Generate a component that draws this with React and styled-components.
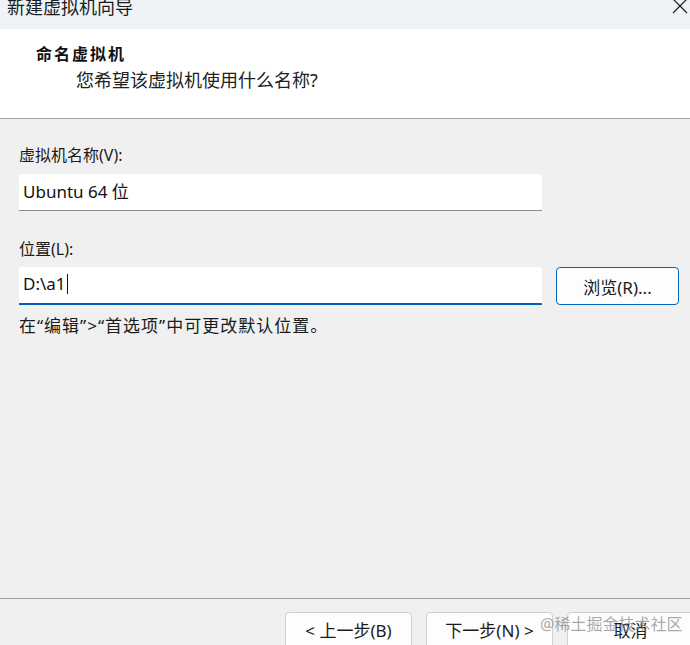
import React from 'react'
import styled, { createGlobalStyle } from 'styled-components'

const GlobalStyle = createGlobalStyle`
  html, body {
    margin: 0;
    padding: 0;
    background: #f0f0f0;
  }
  body {
    font-family: "Noto Sans", "Noto Sans CJK SC", sans-serif;
    color: #1b1b1b;
  }
`

const Window = styled.div`
  position: relative;
  width: 690px;
  height: 645px;
  overflow: hidden;
  display: flex;
  flex-direction: column;
  background: #f0f0f0;
`

/* barre de titre */
const TitleBar = styled.div`
  height: 29px;
  flex-shrink: 0;
  background: #eef3f8;
  display: flex;
  justify-content: space-between;
  align-items: flex-start;
  padding: 0 2px 0 7px;
  overflow: hidden;
`

const Title = styled.div`
  font-size: 18px;
  line-height: 16px;
  margin-top: -2px;
  color: #1b1b1b;
  font-family: "Noto Sans CJK SC", sans-serif;
`

const Close = styled.svg`
  width: 16px;
  height: 16px;
  margin-top: -1px;
`

const Header = styled.div`
  height: 90px;
  flex-shrink: 0;
  box-sizing: border-box;
  background: #ffffff;
  border-bottom: 1px solid #a0a0a0;
  display: flex;
  flex-direction: column;
  padding-top: 13px;
`

const Heading = styled.div`
  margin-left: 36px;
  font-size: 16px;
  line-height: 22px;
  font-weight: 700;
  letter-spacing: 2px;
  font-family: "Noto Sans CJK SC", sans-serif;
  color: #111;
`

const SubHeading = styled.div`
  margin-left: 76px;
  margin-top: 5px;
  font-size: 18px;
  line-height: 22px;
  color: #222;
`

const Body = styled.div`
  flex: 1;
  display: flex;
  flex-direction: column;
  padding: 26px 11px 0 19px;
`

const Label = styled.div`
  font-size: 16px;
  line-height: 20px;
  color: #1b1b1b;
  margin-top: ${(p) => p.gap || 0}px;
`

const Row = styled.div`
  display: flex;
  align-items: flex-start;
  gap: 14px;
  margin-top: ${(p) => p.gap || 0}px;
`

const Field = styled.div`
  width: 523px;
  height: ${(p) => (p.active ? 38 : 37)}px;
  box-sizing: border-box;
  background: #ffffff;
  border-radius: 3px 3px 0 0;
  border-bottom: ${(p) => (p.active ? '2px solid #005fb8' : '1px solid #8a8a8a')};
  display: flex;
  align-items: center;
  padding: 0 0 3px 4px;
  font-size: 17px;
  color: #111;
`

const Caret = styled.span`
  display: inline-block;
  width: 1px;
  height: 20px;
  background: #111;
  margin-left: 1px;
`

const BrowseButton = styled.button`
  width: 123px;
  height: 38px;
  box-sizing: border-box;
  background: #fdfdfd;
  border: 1px solid #0067c0;
  border-radius: 4px;
  font-family: inherit;
  font-size: 17px;
  color: #1b1b1b;
  padding: 0;
`

const Hint = styled.div`
  margin-top: 11px;
  font-size: 17px;
  line-height: 20px;
  letter-spacing: 1px;
  color: #1b1b1b;
`

const Footer = styled.div`
  height: 47px;
  flex-shrink: 0;
  box-sizing: border-box;
  border-top: 1px solid #a0a0a0;
  display: flex;
  gap: 14px;
  padding: 13px 0 0 285px;
`

const FooterButton = styled.button`
  width: 127px;
  height: 38px;
  flex-shrink: 0;
  box-sizing: border-box;
  background: #fdfdfd;
  border: 1px solid #d0d0d0;
  border-radius: 4px;
  font-family: inherit;
  font-size: 17px;
  color: #1b1b1b;
  padding: 0 0 4px;
`

const Watermark = styled.div`
  position: absolute;
  left: 540px;
  top: 611px;
  font-size: 16px;
  color: rgba(140, 140, 140, 0.75);
  pointer-events: none;
`

const App = () => {
  return (
    <Window>
      <GlobalStyle />
      <TitleBar>
        <Title>新建虚拟机向导</Title>
        <Close viewBox="0 0 16 16">
          <path d="M1 0 L15 14 M15 0 L1 14" stroke="#1b1b1b" strokeWidth="1.2" fill="none" />
        </Close>
      </TitleBar>
      <Header>
        <Heading>命名虚拟机</Heading>
        <SubHeading>您希望该虚拟机使用什么名称?</SubHeading>
      </Header>
      <Body>
        <Label>虚拟机名称(V):</Label>
        <Row gap={9}>
          <Field>Ubuntu 64 位</Field>
        </Row>
        <Label gap={28}>位置(L):</Label>
        <Row gap={8}>
          <Field active>
            D:\a1<Caret />
          </Field>
          <BrowseButton>浏览(R)...</BrowseButton>
        </Row>
        <Hint>在“编辑”&gt;“首选项”中可更改默认位置。</Hint>
      </Body>
      <Footer>
        <FooterButton>&lt; 上一步(B)</FooterButton>
        <FooterButton>下一步(N) &gt;</FooterButton>
        <FooterButton>取消</FooterButton>
      </Footer>
      <Watermark>@稀土掘金技术社区</Watermark>
    </Window>
  )
}

export default App
